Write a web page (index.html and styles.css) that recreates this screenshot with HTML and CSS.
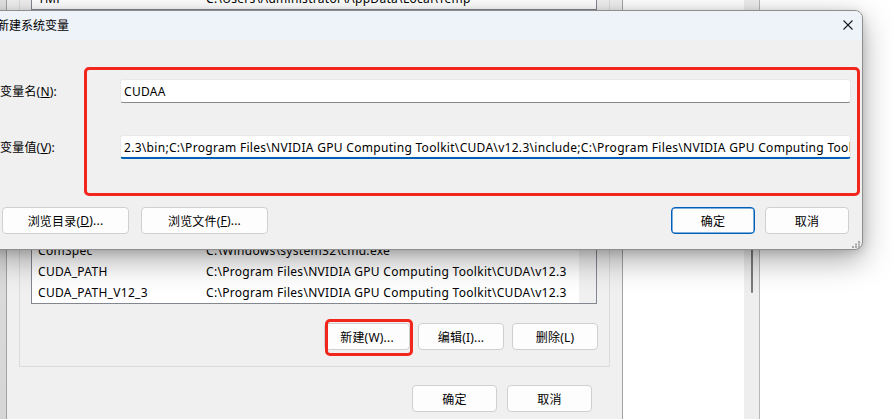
FILE: index.html
```html
<!DOCTYPE html>
<html lang="zh-CN">
<head>
<meta charset="utf-8">
<title>新建系统变量</title>
<link rel="stylesheet" href="styles.css">
</head>
<body>
<div class="desk">
  <div class="edge-left"></div>

  <div class="envwin">
    <div class="grp grp-user">
      <div class="list list-user">
        <div class="row row-user"><span class="c1">TMP</span><span class="c2">C:\Users\Administrator\AppData\Local\Temp</span></div>
      </div>
    </div>
    <div class="grp grp-sys">
      <div class="list list-sys">
        <div class="rows">
          <div class="row"><span class="c1">ComSpec</span><span class="c2">C:\Windows\system32\cmd.exe</span></div>
          <div class="row"><span class="c1">CUDA_PATH</span><span class="c2">C:\Program Files\NVIDIA GPU Computing Toolkit\CUDA\v12.3</span></div>
          <div class="row"><span class="c1">CUDA_PATH_V12_3</span><span class="c2">C:\Program Files\NVIDIA GPU Computing Toolkit\CUDA\v12.3</span></div>
        </div>
        <div class="vscroll"></div>
      </div>
      <div class="btnrow btnrow-sys">
        <button class="btn btn-sys">新建(W)...</button>
        <button class="btn btn-sys">编辑(I)...</button>
        <button class="btn btn-sys">删除(L)</button>
      </div>
    </div>
    <div class="btnrow btnrow-env">
      <button class="btn btn-env">确定</button>
      <button class="btn btn-env">取消</button>
    </div>
  </div>

  <div class="sidewin"><div class="track"><div class="thumb"></div></div></div>

  <div class="dialog">
    <div class="titlebar">
      <span class="title">新建系统变量</span>
      <svg class="close" width="10" height="10" viewBox="0 0 10 10"><path d="M0.5 0.5 L9.5 9.5 M9.5 0.5 L0.5 9.5" stroke="#1a1a1a" stroke-width="1.1" fill="none"/></svg>
    </div>
    <div class="dbody">
      <div class="form">
        <label class="lbl">变量名(<u>N</u>):</label>
        <div class="field"><span class="ftext">CUDAA</span></div>
        <label class="lbl">变量值(<u>V</u>):</label>
        <div class="field field-focus"><span class="ftext">2.3\bin;C:\Program Files\NVIDIA GPU Computing Toolkit\CUDA\v12.3\include;C:\Program Files\NVIDIA GPU Computing Toolkit\CUDA\v12.3\lib\x64</span></div>
      </div>
      <div class="dbtns">
        <div class="dgroup dgroup-left">
          <button class="btn btn-browse">浏览目录(<u>D</u>)...</button>
          <button class="btn btn-browse">浏览文件(<u>F</u>)...</button>
        </div>
        <div class="dgroup dgroup-right">
          <button class="btn btn-ok btn-default">确定</button>
          <button class="btn btn-ok">取消</button>
        </div>
      </div>
    </div>
    <svg class="grip" width="8" height="7" viewBox="0 0 8 7"><g fill="#a8a8a8"><rect x="6" y="0" width="2" height="2"/><rect x="3" y="2.5" width="2" height="2"/><rect x="6" y="2.5" width="2" height="2"/><rect x="0" y="5" width="2" height="2"/><rect x="3" y="5" width="2" height="2"/><rect x="6" y="5" width="2" height="2"/></g></svg>
  </div>

  <div class="mark mark-main"></div>
  <div class="mark mark-new"></div>
</div>
</body>
</html>
```

FILE: styles.css
```css
* { box-sizing: border-box; }
html, body { margin: 0; padding: 0; }
body {
  width: 893px;
  height: 419px;
  overflow: hidden;
  background: #ffffff;
  font-family: "Noto Sans", "Noto Sans CJK SC", sans-serif;
  font-size: 12px;
  color: #000;
}
.desk { position: relative; width: 893px; height: 419px; overflow: hidden; }

.edge-left {
  position: absolute; left: 0; top: 0; width: 6px; height: 419px;
  background: linear-gradient(#e2e2e2, #d6d6d6);
}

/* background environment variables window */
.envwin {
  position: absolute; left: 6px; top: 0; width: 617px; height: 419px;
  background: #f0f0f0;
  border-left: 1px solid #a3a3a3;
  border-right: 1px solid #a3a3a3;
  display: flex; flex-direction: column;
}
.grp {
  margin-left: 12px; width: 591px;
  border-left: 1px solid #dcdcdc; border-right: 1px solid #dcdcdc;
}
.grp-user { height: 10px; }
.grp-sys {
  margin-top: 30px; height: 327px;
  border: 1px solid #dcdcdc;
  padding-top: 19px;
  display: flex; flex-direction: column;
}
.list {
  margin-left: 11px; width: 566px;
  background: #fff;
  border: 1px solid #828790;
  overflow: hidden;
}
.list-user { height: 10px; border-top: none; }
.row-user { margin-top: -12px; }
.list-sys { height: 244px; display: flex; }
.rows { flex: 1; display: flex; flex-direction: column; justify-content: flex-end; }
.vscroll { width: 17px; background: #f0f0f0; }
.row { height: 21px; line-height: 21px; padding-left: 6px; white-space: nowrap; display: flex; letter-spacing: 0.3px; }
.c1 { width: 168px; flex: none; }
.c2 { flex: none; }

.btnrow { display: flex; justify-content: flex-end; }
.btnrow-sys { margin-top: 19px; gap: 8px; padding-right: 11px; }
.btnrow-env { margin-top: 18px; gap: 10px; padding-right: 30px; }

.btn {
  font-family: inherit; font-size: 12px; color: #000;
  background: #fdfdfd;
  border: 1px solid #d0d0d0;
  border-radius: 4px;
  height: 27px; padding: 0;
  display: flex; align-items: center; justify-content: center;
  letter-spacing: 0.2px;
}
.btn-sys { width: 86px; }
.btn-env { width: 85px; }

/* window to the right */
.sidewin {
  position: absolute; left: 623px; top: 0; right: 0; bottom: 0;
  background: #fff;
  padding-left: 121px;
}
.track {
  width: 16px; height: 100%;
  background: #eeeeee;
  border-right: 1px solid #b8b8b8;
  padding-top: 200px; padding-left: 7px;
}
.thumb { width: 2px; height: 93px; background: #7a7a7a; border-radius: 1px; }

/* front dialog */
.dialog {
  position: absolute; left: -12px; top: 10px; width: 875px; height: 240px;
  background: #f0f0f0;
  border: 1px solid #8e8e8e;
  border-radius: 8px;
  box-shadow: 0 10px 30px rgba(0,0,0,0.34), 0 2px 10px rgba(0,0,0,0.14);
  overflow: hidden;
}
.titlebar {
  height: 29px; background: #eef2f9;
  display: flex; align-items: center; justify-content: space-between;
  padding-left: 8px; padding-right: 9px; padding-bottom: 2px;
}
.title { font-size: 12px; }
.close { display: block; }
.dbody { padding: 39px 12px 0 11px; }
.form {
  display: grid;
  grid-template-columns: 120px 731px;
  grid-auto-rows: 24px;
  row-gap: 32px;
  align-items: center;
}
.lbl { white-space: nowrap; letter-spacing: 0.2px; }
.field {
  height: 24px; background: #fff;
  border: 1px solid #e8e8e8;
  border-bottom: 1px solid #8a8a8a;
  border-radius: 3px;
  padding-left: 3px; padding-right: 2px;
  display: flex; align-items: center;
  overflow: hidden; white-space: nowrap;
  letter-spacing: 0.3px;
}
.field-focus { border-bottom: 2px solid #005fb8; padding-top: 1px; }
.ftext { white-space: nowrap; }
.dbtns { margin-top: 48px; display: flex; padding-left: 2px; }
.dgroup { display: flex; }
.dgroup-left { gap: 12px; }
.dgroup-right { gap: 10px; margin-left: auto; margin-right: 1px; }
.btn-browse { width: 127px; }
.btn-ok { width: 84px; }
.btn-default { border: 1px solid #005fb8; box-shadow: inset 0 0 0 0.5px #005fb8; }
.grip { position: absolute; right: 2px; bottom: 1px; }

/* red annotations */
.mark {
  position: absolute;
  border: 3px solid #f2261c;
  border-radius: 5px;
}
.mark-main { left: 84px; top: 67px; width: 776px; height: 129px; }
.mark-new { left: 325px; top: 319px; width: 88px; height: 37px; }
```
